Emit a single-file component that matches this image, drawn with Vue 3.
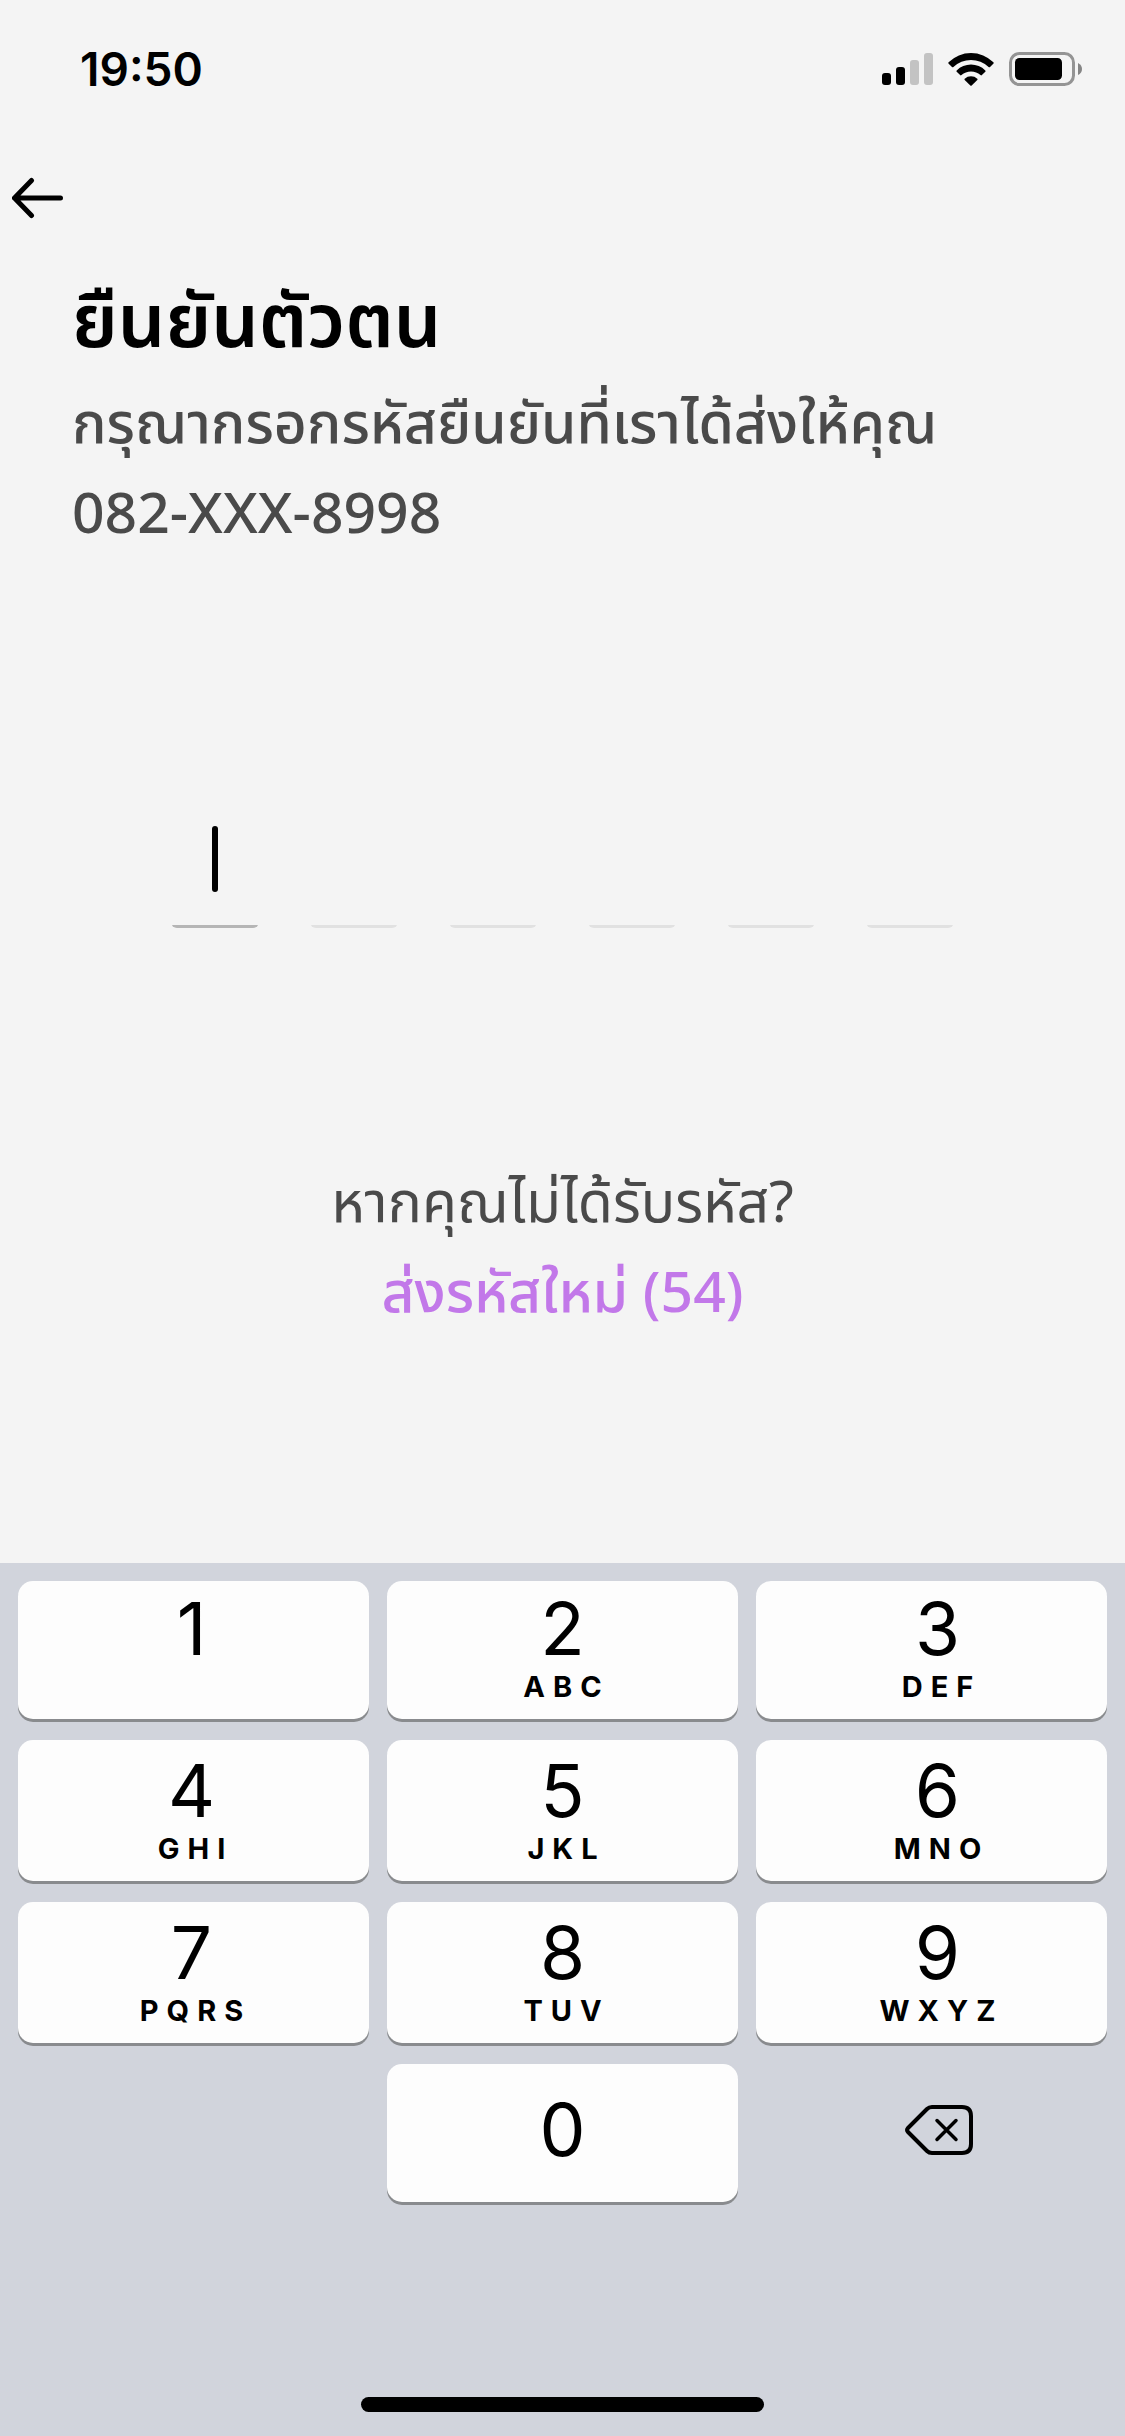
<script setup>
import { ref } from 'vue'

const code = ref(['', '', '', '', '', ''])
const keys = [
  { digit: '1', letters: '' },
  { digit: '2', letters: 'ABC' },
  { digit: '3', letters: 'DEF' },
  { digit: '4', letters: 'GHI' },
  { digit: '5', letters: 'JKL' },
  { digit: '6', letters: 'MNO' },
  { digit: '7', letters: 'PQRS' },
  { digit: '8', letters: 'TUV' },
  { digit: '9', letters: 'WXYZ' },
]

function press(digit) {
  const i = code.value.indexOf('')
  if (i >= 0) code.value[i] = digit
}

function erase() {
  const filled = code.value.filter((d) => d !== '').length
  if (filled) code.value[filled - 1] = ''
}
</script>

<template>
  <div class="screen">
    <header class="status">
      <span class="time">19:50</span>
      <div class="indicators">
        <svg width="51" height="32" viewBox="0 0 51 32" aria-hidden="true">
          <rect x="0" y="20" width="9" height="12" rx="3" />
          <rect x="14" y="14" width="9" height="18" rx="3" />
          <rect x="28" y="7" width="9" height="25" rx="3" fill="#c3c3c3" />
          <rect x="42" y="0" width="9" height="32" rx="3" fill="#c3c3c3" />
        </svg>
        <svg width="46" height="33" viewBox="0 0 46 33" aria-hidden="true">
          <path d="M0.6 9.2 A32 32 0 0 1 45.4 9.2 Q46 10 45.3 10.7 L42 14 Q41.3 14.6 40.6 14 A25.500 25.500 0 0 0 5.400 14 Q4.700 14.600 4 14 L0.700 10.700 Q0 10 0.600 9.200Z" />
          <path d="M8.700 17.400 A20.500 20.500 0 0 1 37.300 17.400 Q38 18.100 37.300 18.800 L33.900 22.100 Q33.200 22.700 32.500 22.100 A14 14 0 0 0 13.500 22.100 Q12.800 22.700 12.100 22.100 L8.700 18.800 Q8 18.100 8.700 17.400Z" />
          <path d="M16.700 25.700 A9.300 9.300 0 0 1 29.300 25.700 Q29.800 26.300 29.300 26.900 L23.700 32.500 Q23 33.100 22.300 32.500 L16.700 26.900 Q16.200 26.300 16.700 25.700Z" />
        </svg>
        <svg width="74" height="34" viewBox="0 0 74 34" aria-hidden="true">
          <rect x="1.500" y="1.500" width="63" height="31" rx="9" fill="none" stroke="#949494" stroke-width="3" />
          <rect x="6" y="6" width="47" height="22" rx="4.500" />
          <path d="M69 11 Q73 13 73 17 Q73 21 69 23Z" fill="#858585" />
        </svg>
      </div>
    </header>

    <nav class="bar">
      <button class="back" type="button" aria-label="ย้อนกลับ">
        <svg width="52" height="42" viewBox="0 0 52 42" fill="none" stroke="#000" stroke-width="5" stroke-linecap="round" stroke-linejoin="round" aria-hidden="true">
          <path d="M48.500 21H2.500M19.500 3.500L2.500 21L19.500 38.500" />
        </svg>
      </button>
    </nav>

    <main class="content">
      <section class="intro">
        <h1>ยืนยันตัวตน</h1>
        <p>กรุณากรอกรหัสยืนยันที่เราได้ส่งให้คุณ</p>
        <p class="phone">082-XXX-8998</p>
      </section>

      <div class="otp">
        <label v-for="(d, i) in code" :key="i" class="cell" :class="{ active: i === code.indexOf('') }">
          <input v-model="code[i]" type="text" inputmode="numeric" maxlength="1" :aria-label="`หลักที่ ${i + 1}`" />
          <span v-if="i === code.indexOf('')" class="caret"></span>
        </label>
      </div>

      <section class="resend">
        <p>หากคุณไม่ได้รับรหัส?</p>
        <button type="button">ส่งรหัสใหม่ (54)</button>
      </section>
    </main>

    <section class="keyboard">
      <div class="keys">
        <button v-for="k in keys" :key="k.digit" type="button" class="key" @click="press(k.digit)">
          <span class="digit">{{ k.digit }}</span>
          <span class="letters">{{ k.letters }}</span>
        </button>
        <button type="button" class="key zero" @click="press('0')">
          <span class="digit">0</span>
        </button>
        <button type="button" class="erase" aria-label="ลบ" @click="erase">
          <svg width="68" height="50" viewBox="0 0 68 50" fill="none" stroke="#000" stroke-width="4" stroke-linecap="round" stroke-linejoin="round" aria-hidden="true">
            <path d="M27 2H57Q66 2 66 11V39Q66 48 57 48H27Q24 48 22 46L3 27Q1 25 3 23L22 4Q24 2 27 2Z" />
            <path d="M32 15.500L51 34.500M51 15.500L32 34.500" stroke-width="3.500" />
          </svg>
        </button>
      </div>
      <div class="home"></div>
    </section>
  </div>
</template>

<style>
body {
  margin: 0;
  background: #f4f4f4;
}
</style>

<style scoped>
.screen {
  min-height: 100vh;
  display: flex;
  flex-direction: column;
  background: #f4f4f4;
  color: #000;
  font-family: "Noto Sans", "Noto Sans Thai", sans-serif;
}

button {
  padding: 0;
  border: 0;
  background: none;
  color: inherit;
  font: inherit;
  cursor: pointer;
}

svg {
  display: block;
}

.status {
  height: 138px;
  box-sizing: border-box;
  padding: 0 42px 0 80px;
  display: flex;
  align-items: center;
  justify-content: space-between;
}

.time {
  font-family: Inter, sans-serif;
  font-size: 46px;
  font-weight: 600;
  line-height: 54px;
}

.indicators {
  display: flex;
  align-items: center;
  gap: 15px;
}

.bar {
  height: 120px;
  padding-left: 12px;
  display: flex;
  align-items: center;
}

.content {
  flex: 1;
}

.intro {
  padding: 12px 72px 0;
}

h1,
p {
  margin: 0;
}

h1 {
  margin-bottom: 10px;
  font-size: 75px;
  font-weight: 600;
  line-height: 96px;
}

p,
.resend button {
  color: #4a4a4a;
  font-size: 57px;
  line-height: 90px;
}

.intro p {
  font-weight: 500;
}

.otp {
  margin-top: 234px;
  display: flex;
  justify-content: center;
  gap: 51px;
}

.cell {
  position: relative;
  width: 88px;
  height: 138px;
  border-radius: 6px;
  overflow: hidden;
}

.cell::after {
  content: "";
  position: absolute;
  inset: auto 0 0;
  height: 3px;
  background: #e1e1e1;
}

.cell.active::after {
  background: #b5b5b5;
}

.cell input {
  width: 100%;
  height: 100%;
  box-sizing: border-box;
  padding: 0;
  border: 0;
  outline: 0;
  background: none;
  font: inherit;
  font-size: 57px;
  text-align: center;
  caret-color: transparent;
}

.caret {
  position: absolute;
  left: 41px;
  bottom: 36px;
  width: 6px;
  height: 66px;
  border-radius: 3px;
  background: #000;
}

.resend {
  margin-top: 227px;
  display: flex;
  flex-direction: column;
  align-items: center;
}

.resend button {
  color: #c278e9;
  font-weight: 500;
}

.keyboard {
  padding: 18px 18px 24px;
  background: #d1d4dc;
  font-family: Inter, sans-serif;
}

.keys {
  display: grid;
  grid-template-columns: repeat(3, 1fr);
  grid-template-rows: 138px 141px 141px 138px;
  gap: 21px 18px;
}

.key {
  padding-bottom: 14px;
  display: flex;
  flex-direction: column;
  align-items: center;
  justify-content: flex-end;
  gap: 4px;
  border-radius: 15px;
  background: #fdfdfd;
  box-shadow: 0 3px 0 #898b8e;
}

.key:nth-child(3n + 1) {
  padding-right: 4px;
}

.key:nth-child(3n) {
  padding-left: 12px;
}

.digit {
  font-size: 73px;
  line-height: 72px;
}

.letters {
  height: 36px;
  padding-left: 8px;
  font-size: 29px;
  font-weight: 700;
  line-height: 36px;
  letter-spacing: 8px;
}

.key.zero {
  grid-column: 2;
  padding: 0 0 6px;
  justify-content: center;
}

.erase {
  padding: 0 0 6px 14px;
  display: flex;
  align-items: center;
  justify-content: center;
}

.home {
  width: 37%;
  height: 15px;
  margin: 195px auto 0;
  border-radius: 8px;
  background: #000;
}
</style>
